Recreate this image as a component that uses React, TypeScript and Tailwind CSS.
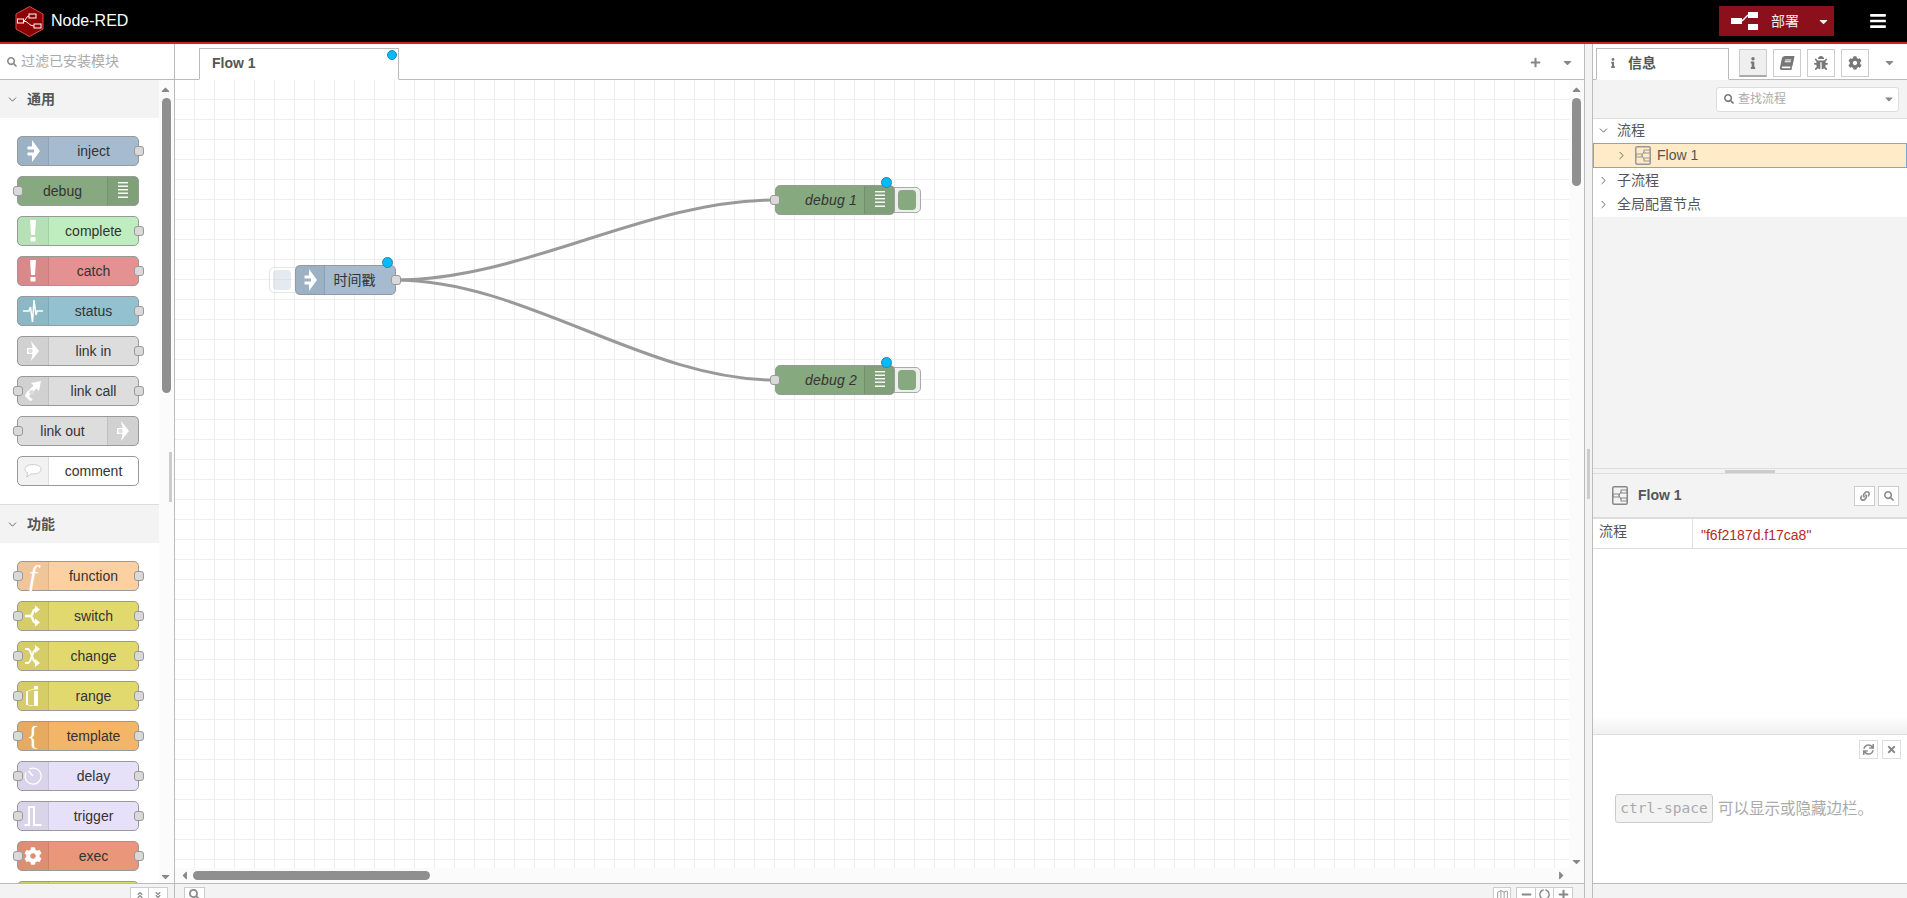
import React from "react";
import { FaBars, FaBook, FaBug, FaCaretDown, FaCaretLeft, FaCaretRight, FaCaretUp, FaCog, FaInfo, FaLink, FaMinus, FaPlus, FaSearch, FaSync, FaTimes, FaCircleNotch, FaAngleDoubleUp, FaAngleDoubleDown } from "react-icons/fa";
import { ChevronDown, ChevronRight, Map as MapIcon } from "lucide-react";

const W = { stroke: "#fff", fill: "none" } as const;

function ArrowIcon() {
  return (
    <svg width="13" height="22" viewBox="0 0 13 22">
      <path d="M5 0 L13 11 L5 22 L5 15.5 L0.5 15.5 L0.5 12.5 L7 12.5 L7 9.5 L0.5 9.5 L0.5 6.5 L5 6.5 Z" fill="#fff" />
    </svg>
  );
}
function DebugIcon() {
  return (
    <svg width="10" height="18" viewBox="0 0 10 18">
      {[1, 4.5, 8, 11.5, 15.5].map((y) => (
        <rect key={y} x="0" y={y - 1} width="10" height="1.4" fill="#fff" />
      ))}
    </svg>
  );
}
function BangIcon() {
  return (
    <svg width="8" height="22" viewBox="0 0 8 22">
      <path d="M1 0 H7 L6 15 H2 Z M1.5 17 H6.5 V21.5 H1.5 Z" fill="#fff" />
    </svg>
  );
}
function PulseIcon() {
  return (
    <svg width="20" height="24" viewBox="0 0 20 24">
      <path d="M0 12 H6 L7.5 8 L9.5 23 L11 1 L13 16 L14 12 H20" {...W} strokeWidth="1.5" />
    </svg>
  );
}
function LinkInIcon() {
  return (
    <svg width="14" height="22" viewBox="0 0 14 22">
      <path d="M5 1 L13 11 L5 21 L6.5 14 L1 14 L1 8 L6.5 8 Z" fill="#fff" />
      <circle cx="4.5" cy="11" r="2.2" fill="#ddd" />
    </svg>
  );
}
function LinkCallIcon() {
  return (
    <svg width="18" height="22" viewBox="0 0 18 22">
      <path d="M17 1 L15 11 L12.5 8.5 L5 16 L9 20 L6 21 L1 16 L2 13 L9.5 5.5 L7 3 Z" fill="#fff" />
      <circle cx="7.5" cy="12.5" r="2.4" fill="#ddd" />
    </svg>
  );
}
function CommentIcon() {
  return (
    <svg width="18" height="16" viewBox="0 0 18 16">
      <path d="M9 1.5 C14 1.5 17 3.6 17 6.2 C17 9 14 11 9 11 L7 11 L2.5 14 L4 10 C2 9.2 1 7.8 1 6.2 C1 3.6 4 1.5 9 1.5 Z" fill="#fff" stroke="#ccc" />
    </svg>
  );
}
function SwitchIcon() {
  return (
    <svg width="16" height="22" viewBox="0 0 16 22">
      <path d="M0 11 H5 C7 11 7.5 9 8 7 C8.5 5 10 4.5 11 4.5 M5 11 C7 11 7.5 13 8 15 C8.5 17 10 17.5 11 17.5" {...W} strokeWidth="2.4" />
      <path d="M10 0.5 L15 4.5 L10 8.5 Z M10 13.5 L15 17.5 L10 21.5 Z" fill="#fff" />
    </svg>
  );
}
function ChangeIcon() {
  return (
    <svg width="16" height="22" viewBox="0 0 16 22">
      <path d="M0 4 H3 C6 4 8 18 11 18 M0 18 H3 C6 18 8 4 11 4" {...W} strokeWidth="2.2" />
      <path d="M10 0 L15 4 L10 8 Z M10 14 L15 18 L10 22 Z" fill="#fff" />
    </svg>
  );
}
function RangeIcon() {
  return (
    <svg width="14" height="20" viewBox="0 0 14 20">
      <rect x="8" y="0" width="4" height="3.5" fill="#fff" />
      <rect x="8" y="5" width="4" height="15" fill="#fff" />
      <rect x="0" y="5" width="2" height="14" fill="#fff" />
      <path d="M2 5 L8 3 M2 19 L8 20" {...W} strokeWidth="0.7" />
    </svg>
  );
}
function DelayIcon() {
  return (
    <svg width="18" height="18" viewBox="0 0 18 18">
      <path d="M5.5 2 A8 8 0 1 1 2 5.5" {...W} strokeWidth="1.2" />
      <path d="M9 9 L4.5 4" {...W} strokeWidth="1.6" />
    </svg>
  );
}
function TriggerIcon() {
  return (
    <svg width="18" height="22" viewBox="0 0 18 22">
      <path d="M0.5 20 H5 V2 H10 V20 H17.5" {...W} strokeWidth="2" />
    </svg>
  );
}
function FlowIcon({ color = "#888" }: { color?: string }) {
  return (
    <svg width="16" height="19" viewBox="0 0 16 19">
      <rect x="0.75" y="0.75" width="14.5" height="17.5" rx="1.5" fill="none" stroke={color} strokeWidth="1.5" />
      <rect x="9" y="4" width="6" height="3" fill="none" stroke={color} />
      <rect x="1" y="8" width="6" height="3" fill="none" stroke={color} />
      <rect x="9" y="12" width="6" height="3" fill="none" stroke={color} />
      <path d="M7 9.5 L9 5.5 M7 9.5 L9 13.5" stroke={color} fill="none" />
    </svg>
  );
}
function DeployIcon() {
  return (
    <svg width="28" height="18" viewBox="0 0 28 18">
      <rect x="0" y="6" width="11" height="6" fill="#fff" />
      <rect x="17" y="0" width="10" height="6" fill="#fff" />
      <rect x="17" y="12" width="10" height="6" fill="#fff" />
      <path d="M11 9 L17 3" stroke="#fff" strokeWidth="1.5" />
    </svg>
  );
}
function Logo() {
  return (
    <svg width="29" height="31" viewBox="0 0 29 31">
      <path d="M14.5 0.5 L28 8 V23 L14.5 30.5 L1 23 V8 Z" fill="#8f0000" stroke="#d65050" strokeWidth="1" />
      <g fill="none" stroke="#fff" strokeWidth="1">
        <rect x="2.5" y="13" width="6" height="4" />
        <rect x="14" y="8" width="7" height="4" />
        <rect x="19" y="18" width="7" height="4" />
        <path d="M8.5 15 C11 15 11 10 14 10 M8.5 15 C13 15 14 20 19 20" />
      </g>
    </svg>
  );
}

function Port({ side, canvas }: { side: "l" | "r"; canvas?: boolean }) {
  return (
    <span
      className={
        "absolute top-[9px] w-[10px] h-[10px] rounded-[3px] bg-[#d9d9d9] border border-[#999] " +
        (side === "l" ? (canvas ? "left-[-6px]" : "left-[-5px]") : "right-[-6px]")
      }
    />
  );
}

type PN = { label: string; color: string; icon: React.ReactNode; i?: boolean; o?: boolean; right?: boolean };

function PaletteNode({ label, color, icon, i, o, right }: PN) {
  const panel = (
    <span
      className={
        "w-[31px] h-full shrink-0 flex items-center justify-center bg-[rgba(0,0,0,0.05)] border-[rgba(0,0,0,0.08)] " +
        (right ? "border-l" : "border-r")
      }
    >
      {icon}
    </span>
  );
  return (
    <div
      className="relative w-[122px] h-[30px] rounded-[5px] border border-[#999] flex items-center text-[14px] text-[#333] shrink-0"
      style={{ backgroundColor: color }}
    >
      {!right && panel}
      <span className="flex-1 text-center whitespace-nowrap">{label}</span>
      {right && panel}
      {i && <Port side="l" />}
      {o && <Port side="r" />}
    </div>
  );
}

const common: PN[] = [
  { label: "inject", color: "#a6bbcf", icon: <ArrowIcon />, o: true },
  { label: "debug", color: "#87a980", icon: <DebugIcon />, i: true, right: true },
  { label: "complete", color: "#c0edc0", icon: <BangIcon />, o: true },
  { label: "catch", color: "#e49191", icon: <BangIcon />, o: true },
  { label: "status", color: "#94c1d0", icon: <PulseIcon />, o: true },
  { label: "link in", color: "#dddddd", icon: <LinkInIcon />, o: true },
  { label: "link call", color: "#dddddd", icon: <LinkCallIcon />, i: true, o: true },
  { label: "link out", color: "#dddddd", icon: <LinkInIcon />, i: true, right: true },
  { label: "comment", color: "#ffffff", icon: <CommentIcon /> },
];
const fn: PN[] = [
  { label: "function", color: "#fdd0a2", icon: <span className="text-white text-[30px] italic leading-none font-['Liberation_Serif',serif]">f</span>, i: true, o: true },
  { label: "switch", color: "#e2d96e", icon: <SwitchIcon />, i: true, o: true },
  { label: "change", color: "#e2d96e", icon: <ChangeIcon />, i: true, o: true },
  { label: "range", color: "#e2d96e", icon: <RangeIcon />, i: true, o: true },
  { label: "template", color: "#f3b567", icon: <span className="text-white text-[28px] leading-none font-['Liberation_Serif',serif]">{"{"}</span>, i: true, o: true },
  { label: "delay", color: "#e6e0f8", icon: <DelayIcon />, i: true, o: true },
  { label: "trigger", color: "#e6e0f8", icon: <TriggerIcon />, i: true, o: true },
  { label: "exec", color: "#e9967a", icon: <FaCog className="text-white text-[18px]" />, i: true, o: true },
  { label: "", color: "#e2d96e", icon: null },
];

function Category({ title, nodes, border }: { title: string; nodes: PN[]; border?: boolean }) {
  return (
    <div>
      <div className={"w-[159px] bg-[#f3f3f3] flex items-center text-[14px] font-bold text-[#555] " + (border ? "h-[39px] border-t border-[#ddd]" : "h-[38px]")}>
        <ChevronDown size={13} strokeWidth={1.6} className="ml-[6px] mr-[8px] text-[#555]" />
        {title}
      </div>
      <div className="pl-[17px] pt-[18px] pb-[18px] flex flex-col gap-[10px]">
        {nodes.map((n, k) => (
          <PaletteNode key={k} {...n} />
        ))}
      </div>
    </div>
  );
}

function Palette() {
  return (
    <div className="w-[175px] shrink-0 border-r border-[#bbb] flex flex-col h-full bg-white">
      <div className="h-[36px] shrink-0 border-b border-[#bbb] flex items-center pl-[7px] text-[14px] text-[#aaa]">
        <FaSearch className="text-[10px] text-[#888] mr-[4px]" />
        过滤已安装模块
      </div>
      <div className="relative flex-1 overflow-hidden">
        <Category title="通用" nodes={common} />
        <Category title="功能" nodes={fn} border />
        <div className="absolute right-0 top-0 bottom-0 w-[15px] bg-[#fbfbfb]">
          <FaCaretUp className="absolute left-[0px] top-[3px] text-[#888] text-[13px]" />
          <div className="absolute left-[3px] top-[18px] w-[9px] h-[295px] rounded-[5px] bg-[#8f8f8f]" />
          <div className="absolute right-[2px] top-[372px] w-[3px] h-[50px] bg-[#ccc]" />
          <FaCaretDown className="absolute left-[0px] bottom-[0px] text-[#888] text-[13px]" />
        </div>
      </div>
      <div className="h-[15px] shrink-0 border-t border-[#bbb] bg-[#f3f3f3] flex justify-end pt-[3px] pr-[6px]">
        <div className="flex h-[14px] border border-[#ccc] bg-white text-[#888] text-[8px]">
          <span className="w-[18px] flex justify-center pt-[3px] border-r border-[#ccc]"><FaAngleDoubleUp /></span>
          <span className="w-[18px] flex justify-center pt-[3px]"><FaAngleDoubleDown /></span>
        </div>
      </div>
    </div>
  );
}

function CanvasNode({ x, y, w, color, panelRight, label, italic, icon, input, output, btn }: {
  x: number; y: number; w: number; color: string; panelRight?: boolean; label: string; italic?: boolean; icon: React.ReactNode; input?: boolean; output?: boolean; btn: "l" | "r";
}) {
  return (
    <div className="absolute" style={{ left: x, top: y, width: w, height: 30 }}>
      <div
        className={
          "absolute top-[2px] w-[28px] h-[26px] border flex items-center justify-center " +
          (btn === "l" ? "left-[-26px] rounded-l-[5px] opacity-50 bg-white border-[#ccc]" : "right-[-26px] rounded-r-[5px] border-[#aaa] bg-[#eeeeee]")
        }
      >
        <span className={"block w-[18px] h-[20px] rounded-[4px] " + (btn === "l" ? "opacity-60 ml-[2px] mr-[4px]" : "ml-[-1px]")} style={{ backgroundColor: color }} />
      </div>
      <div
        className="relative w-full h-full rounded-[5px] border border-[#999] flex items-center text-[14px] text-[#333]"
        style={{ backgroundColor: color }}
      >
        {!panelRight && <span className="w-[29px] h-full shrink-0 flex items-center justify-center bg-[rgba(0,0,0,0.05)] border-r border-[rgba(0,0,0,0.1)]">{icon}</span>}
        <span className={"flex-1 whitespace-nowrap " + (italic ? "italic text-right pr-[7px] tracking-[0.2px]" : "text-center pr-[11px]")}>{label}</span>
        {panelRight && <span className="w-[30px] h-full shrink-0 flex items-center justify-center bg-[rgba(0,0,0,0.05)] border-l border-[rgba(0,0,0,0.1)]">{icon}</span>}
        {input && <Port side="l" canvas />}
        {output && <Port side="r" />}
      </div>
      <span className="absolute right-[3px] top-[-8px] w-[11px] h-[11px] rounded-full bg-[#00bcff] border border-[#2a85ad]" />
    </div>
  );
}

function Workspace() {
  return (
    <div className="flex-1 min-w-0 flex flex-col h-full border-r border-[#bbb] bg-white">
      <div className="relative h-[36px] shrink-0 border-b border-[#bbb] flex items-end pl-[24px]">
        <div className="relative w-[200px] h-[32px] mb-[-1px] border border-[#bbb] border-b-white bg-white flex items-center pl-[12px] pb-[2px] text-[14px] font-bold text-[#555]">
          Flow 1
          <span className="absolute right-[1px] top-[1px] w-[10px] h-[10px] rounded-full bg-[#00bcff] border border-[#2a85ad]" />
        </div>
        <FaPlus className="absolute right-[43px] top-[13px] text-[11px] text-[#888]" />
        <FaCaretDown className="absolute right-[10px] top-[12px] text-[13px] text-[#888]" />
      </div>
      <div className="relative flex-1 overflow-hidden bg-white bg-[linear-gradient(to_right,#eeeeee_1px,transparent_1px),linear-gradient(to_bottom,#eeeeee_1px,transparent_1px)] bg-[size:20px_20px] bg-[position:19px_19px]">
        <svg className="absolute inset-0" width="1409" height="803">
          <g fill="none" stroke="#999" strokeWidth="3">
            <path d="M220 200 C 350 200, 470 120, 600 120" />
            <path d="M220 200 C 350 200, 470 300, 600 300" />
          </g>
        </svg>
        <CanvasNode x={120} y={185} w={101} color="#a6bbcf" label="时间戳" icon={<ArrowIcon />} output btn="l" />
        <CanvasNode x={600} y={105} w={120} color="#87a980" panelRight label="debug 1" italic icon={<DebugIcon />} input btn="r" />
        <CanvasNode x={600} y={285} w={120} color="#87a980" panelRight label="debug 2" italic icon={<DebugIcon />} input btn="r" />

        <div className="absolute right-0 top-0 bottom-0 w-[15px] bg-[#fbfbfb]">
          <FaCaretUp className="absolute left-[1px] top-[3px] text-[#888] text-[13px]" />
          <div className="absolute left-[3px] top-[18px] w-[9px] h-[88px] rounded-[5px] bg-[#8f8f8f]" />
          <FaCaretDown className="absolute left-[1px] bottom-[15px] text-[#888] text-[13px]" />
        </div>
        <div className="absolute left-0 right-0 bottom-0 h-[15px] bg-[#fbfbfb]">
          <FaCaretLeft className="absolute left-[3px] top-[1px] text-[#888] text-[13px]" />
          <div className="absolute left-[18px] top-[3px] w-[237px] h-[9px] rounded-[5px] bg-[#8f8f8f]" />
          <FaCaretRight className="absolute right-[16px] top-[1px] text-[#888] text-[13px]" />
        </div>
      </div>
      <div className="h-[15px] shrink-0 border-t border-[#bbb] bg-[#f3f3f3] flex justify-between pt-[3px] pl-[9px] pr-[11px]">
        <span className="w-[21px] h-[14px] border border-[#ccc] bg-white flex justify-center pt-[1px]"><FaSearch className="text-[#888] text-[11px]" /></span>
        <div className="flex gap-[5px] text-[#888] text-[11px]">
          <span className="w-[18px] h-[14px] border border-[#ccc] bg-white flex justify-center pt-[1px]"><MapIcon size={13} strokeWidth={1.5} /></span>
          <div className="flex h-[14px] border border-[#ccc] bg-white">
            <span className="w-[18px] flex justify-center pt-[1px]"><FaMinus /></span>
            <span className="w-[19px] flex justify-center pt-[1px] border-x border-[#ccc]"><FaCircleNotch /></span>
            <span className="w-[18px] flex justify-center pt-[1px]"><FaPlus /></span>
          </div>
        </div>
      </div>
    </div>
  );
}

function TabBtn({ children, active }: { children: React.ReactNode; active?: boolean }) {
  return (
    <span className={"w-[28px] h-[28px] border flex items-center justify-center text-[#777] text-[14px] " + (active ? "bg-[#efefef] border-[#ccc] border-b-[2px] border-b-[#aaa]" : "bg-white border-[#ccc]")}>
      {children}
    </span>
  );
}

function TreeRow({ open, label, h }: { open?: boolean; label: string; h: string }) {
  return (
    <div className={"flex items-center text-[14px] text-[#555] pl-[4px] " + h}>
      {open ? <ChevronDown size={13} strokeWidth={1.6} className="text-[#555]" /> : <ChevronRight size={13} strokeWidth={1.6} className="text-[#555]" />}
      <span className="ml-[7px]">{label}</span>
    </div>
  );
}

function Sidebar() {
  return (
    <div className="w-[315px] shrink-0 border-l border-[#bbb] flex flex-col h-full bg-white">
      <div className="relative h-[36px] shrink-0 border-b border-[#bbb] flex items-end pl-[3px] pb-0">
        <div className="w-[133px] h-[32px] mb-[-1px] border border-[#bbb] border-b-white bg-white flex items-center pl-[11px] pb-[2px] text-[14px] font-bold text-[#555]">
          <FaInfo className="text-[10px] text-[#777] mr-[10px]" />
          信息
        </div>
        <div className="flex gap-[6px] ml-[10px] mb-[2px]">
          <TabBtn active><FaInfo className="text-[12px]" /></TabBtn>
          <TabBtn><FaBook className="-skew-x-12" /></TabBtn>
          <TabBtn><FaBug /></TabBtn>
          <TabBtn><FaCog /></TabBtn>
        </div>
        <FaCaretDown className="text-[#888] text-[13px] ml-[14px] mb-[10px]" />
      </div>
      <div className="h-[39px] shrink-0 bg-[#f3f3f3] border-b border-[#ddd] flex items-center justify-end pr-[8px]">
        <div className="w-[183px] h-[25px] rounded-[3px] border border-[#ddd] bg-white flex items-center pl-[7px] pr-[3px] text-[12px] text-[#aaa]">
          <FaSearch className="text-[10px] text-[#777] mr-[4px]" />
          <span className="flex-1">查找流程</span>
          <FaCaretDown className="text-[#888] text-[12px]" />
        </div>
      </div>
      <div className="h-[349px] shrink-0 bg-[#f3f3f3] flex flex-col">
        <div className="bg-white">
          <TreeRow open label="流程" h="h-[24px] pb-[2px]" />
          <div className="h-[25px] bg-[#ffebc7] border border-[#7fa6d6] flex items-center pl-[21px] text-[14px] text-[#555]">
            <ChevronRight size={13} strokeWidth={1.6} className="text-[#555] mr-[7px]" />
            <FlowIcon color="#999" />
            <span className="ml-[6px]">Flow 1</span>
          </div>
          <TreeRow label="子流程" h="h-[25px]" />
          <TreeRow label="全局配置节点" h="h-[24px] pb-[2px]" />
        </div>
      </div>
      <div className="h-[6px] shrink-0 bg-[#f3f3f3] border-y border-[#ddd] flex justify-center items-center">
        <span className="w-[50px] h-[3px] bg-[#ccc]" />
      </div>
      <div className="h-[43px] shrink-0 bg-[#f3f3f3] flex items-center pl-[19px] pr-[8px] text-[14px] font-bold text-[#555]">
        <FlowIcon />
        <span className="ml-[10px] flex-1">Flow 1</span>
        <span className="w-[21px] h-[20px] border border-[#ccc] bg-white flex items-center justify-center text-[10px] text-[#888] mr-[3px]"><FaLink /></span>
        <span className="w-[21px] h-[20px] border border-[#ccc] bg-white flex items-center justify-center text-[10px] text-[#888]"><FaSearch /></span>
      </div>
      <div className="h-[32px] shrink-0 border-t-2 border-b border-[#ddd] flex text-[14px]">
        <div className="w-[100px] border-r border-[#ddd] pl-[6px] pt-[2px] text-[#555]">流程</div>
        <div className="pl-[8px] pt-[6px] text-[#b72828]">"f6f2187d.f17ca8"</div>
      </div>
      <div className="h-[186px] shrink-0 bg-gradient-to-b from-white from-[90%] to-[#f0f0f0] border-b border-[#ddd]" />
      <div className="relative flex-1 min-h-0">
        <div className="absolute right-[6px] top-[5px] flex gap-[4px] text-[#888] text-[11px]">
          <span className="w-[19px] h-[19px] border border-[#ddd] flex items-center justify-center"><FaSync /></span>
          <span className="w-[19px] h-[19px] border border-[#ddd] flex items-center justify-center"><FaTimes /></span>
        </div>
        <div className="pl-[22px] pt-[59px] flex items-center text-[15.5px] text-[#aaa]">
          <span className="h-[29px] w-[98px] flex items-center justify-center rounded-[3px] border border-[#ccc] bg-[#f3f3f3] font-['DejaVu_Sans_Mono',monospace] text-[14.5px] mr-[5px]">ctrl-space</span>
          可以显示或隐藏边栏。
        </div>
      </div>
      <div className="h-[15px] shrink-0 border-t border-[#bbb] bg-[#f3f3f3]" />
    </div>
  );
}

export default function App() {
  return (
    <div className="w-[1907px] h-[898px] overflow-hidden flex flex-col bg-white font-['Liberation_Sans','Noto_Sans_CJK_SC',sans-serif]">
      <header className="h-[44px] shrink-0 bg-black border-b-[2px] border-[#ca2525] flex items-center pl-[15px] pr-[20px] text-white">
        <Logo />
        <span className="ml-[7px] text-[16px]">Node-RED</span>
        <div className="ml-auto w-[115px] h-[30px] bg-[#8c101c] flex items-center pl-[12px] text-[14px] text-[#eee]">
          <DeployIcon />
          <span className="ml-[12px]">部署</span>
          <FaCaretDown className="ml-[18px] text-[13px]" />
        </div>
        <FaBars className="ml-[35px] text-[18px] w-[18px]" />
      </header>
      <div className="flex-1 min-h-0 flex">
        <Palette />
        <Workspace />
        <div className="relative w-[7px] shrink-0 bg-[#f3f3f3]">
          <span className="absolute left-[2px] top-[405px] w-[3px] h-[50px] bg-[#ccc]" />
        </div>
        <Sidebar />
      </div>
    </div>
  );
}
